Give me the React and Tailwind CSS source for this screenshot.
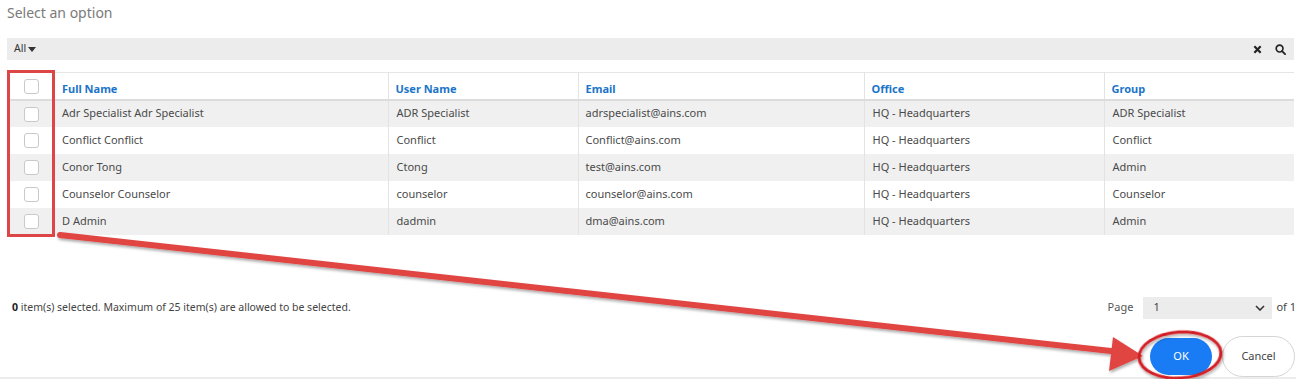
import React from 'react';

const rows = [
  { name: 'Adr Specialist Adr Specialist', user: 'ADR Specialist', email: 'adrspecialist@ains.com', office: 'HQ - Headquarters', group: 'ADR Specialist' },
  { name: 'Conflict Conflict', user: 'Conflict', email: 'Conflict@ains.com', office: 'HQ - Headquarters', group: 'Conflict' },
  { name: 'Conor Tong', user: 'Ctong', email: 'test@ains.com', office: 'HQ - Headquarters', group: 'Admin' },
  { name: 'Counselor Counselor', user: 'counselor', email: 'counselor@ains.com', office: 'HQ - Headquarters', group: 'Counselor' },
  { name: 'D Admin', user: 'dadmin', email: 'dma@ains.com', office: 'HQ - Headquarters', group: 'Admin' },
];

const Box = () => (
  <span className="inline-block w-[15px] h-[15px] rounded-[3px] border border-[#c9c9c9] bg-white align-middle" />
);

const App = () => {
  return (
    <div
      className="relative w-full h-[379px] bg-white overflow-hidden text-[#4a4a4a]"
      style={{ fontFamily: '"Noto Sans", "Open Sans", sans-serif' }}
    >
      {/* Title */}
      <div className="h-[38px] pl-[7px] pt-[2px] text-[14px] text-[#7a7a7a]">Select an option</div>

      {/* Filter bar */}
      <div className="ml-[7px] mr-[2px] h-[22px] bg-[#ececec] flex items-center justify-between pl-[7px] pr-[8px] text-[10.5px] text-[#333]">
        <div className="flex items-center gap-[2px]">
          All
          <svg width="8" height="5" viewBox="0 0 8 5"><path d="M0 0h8L4 5z" fill="#333" /></svg>
        </div>
        <div className="flex items-center gap-[13px]">
          <svg width="9" height="9" viewBox="0 0 10 10"><path d="M1.5 1.5l7 7M8.5 1.5l-7 7" stroke="#222" strokeWidth="2.4" /></svg>
          <svg width="11" height="11" viewBox="0 0 12 12"><circle cx="5" cy="5" r="3.7" fill="none" stroke="#222" strokeWidth="1.8" /><path d="M7.7 7.7L11 11" stroke="#222" strokeWidth="2" strokeLinecap="round" /></svg>
        </div>
      </div>

      {/* Table */}
      <div className="ml-[7px] mr-[2px] mt-[12px]">
        <table className="w-full table-fixed border-collapse text-[11px]">
          <colgroup>
            <col className="w-[48px]" />
            <col className="w-[333px]" />
            <col className="w-[190px]" />
            <col className="w-[286px]" />
            <col className="w-[240px]" />
            <col />
          </colgroup>
          <thead>
            <tr className="h-[27px] border-t border-[#e6e6e6] border-b-2 border-b-[#dcdcdc]">
              <th className="text-center align-middle"><Box /></th>
              {['Full Name', 'User Name', 'Email', 'Office', 'Group'].map((h, i) => (
                <th
                  key={h}
                  className={`text-left font-bold text-[#1b75c9] pl-[7px] pt-[7px] ${i > 0 ? 'border-l border-[#e3e3e3]' : ''}`}
                >
                  {h}
                </th>
              ))}
            </tr>
          </thead>
          <tbody>
            {rows.map((r, idx) => (
              <tr key={r.name} className={`h-[27px] ${idx % 2 === 0 ? 'bg-[#f0f0f0]' : 'bg-white'}`}>
                <td className="text-center align-middle"><Box /></td>
                <td className="pl-[7px] truncate">{r.name}</td>
                <td className="pl-[8px] border-l border-[#e3e3e3] truncate">{r.user}</td>
                <td className="pl-[7px] border-l border-[#e3e3e3] truncate">{r.email}</td>
                <td className="pl-[8px] border-l border-[#e3e3e3] truncate">{r.office}</td>
                <td className="pl-[8px] border-l border-[#e3e3e3] truncate">{r.group}</td>
              </tr>
            ))}
          </tbody>
        </table>
      </div>

      {/* Footer info + paging */}
      <div className="mt-[62px] flex items-center justify-between pl-[12px] text-[10.5px] text-[#444]">
        <div>
          <span className="font-bold text-[#222]">0</span> item(s) selected. Maximum of 25 item(s) are allowed to be selected.
        </div>
        <div className="flex items-center text-[11px]">
          <span className="mr-[10px] text-[#555]">Page</span>
          <div className="w-[129px] h-[22px] bg-[#ececec] flex items-center justify-between pl-[10px] pr-[7px]">
            <span>1</span>
            <svg width="10" height="6" viewBox="0 0 10 6"><path d="M1 1l4 4 4-4" fill="none" stroke="#333" strokeWidth="1.6" /></svg>
          </div>
          <span className="ml-[4px]">of 1</span>
        </div>
      </div>

      {/* Buttons */}
      <div className="mt-[17px] flex justify-end items-center gap-[10px] pr-[1px]">
        <button className="w-[62px] h-[37px] rounded-full bg-[#1a7cf4] text-white text-[11px]">OK</button>
        <button className="w-[73px] h-[41px] rounded-full border border-[#d5d5d5] bg-white text-[11px] text-[#444]">Cancel</button>
      </div>

      <div className="absolute left-0 right-0 bottom-0 h-[2px] bg-[#ececec]" />

      {/* Annotation: highlight around checkboxes */}
      <div className="absolute left-[7px] top-[70px] w-[48px] h-[167px] border-[3px] border-[#dd4646] pointer-events-none" />

      {/* Annotation: arrow and ellipse */}
      <svg className="absolute inset-0 pointer-events-none" width="1296" height="379" viewBox="0 0 1296 379">
        <defs>
          <filter id="sh" x="-5%" y="-50%" width="110%" height="200%">
            <feDropShadow dx="1" dy="2" stdDeviation="1.5" floodColor="#000" floodOpacity="0.35" />
          </filter>
        </defs>
        <g filter="url(#sh)">
          <line x1="60" y1="235" x2="1120" y2="352" stroke="#e04443" strokeWidth="6" strokeLinecap="round" />
          <polygon points="1143,356 1113,337 1109,371" fill="#e04443" />
          <ellipse cx="1180" cy="355" rx="41" ry="23" fill="none" stroke="#d21f25" strokeWidth="3" transform="rotate(-4 1180 355)" />
        </g>
      </svg>
    </div>
  );
};

export default App;
